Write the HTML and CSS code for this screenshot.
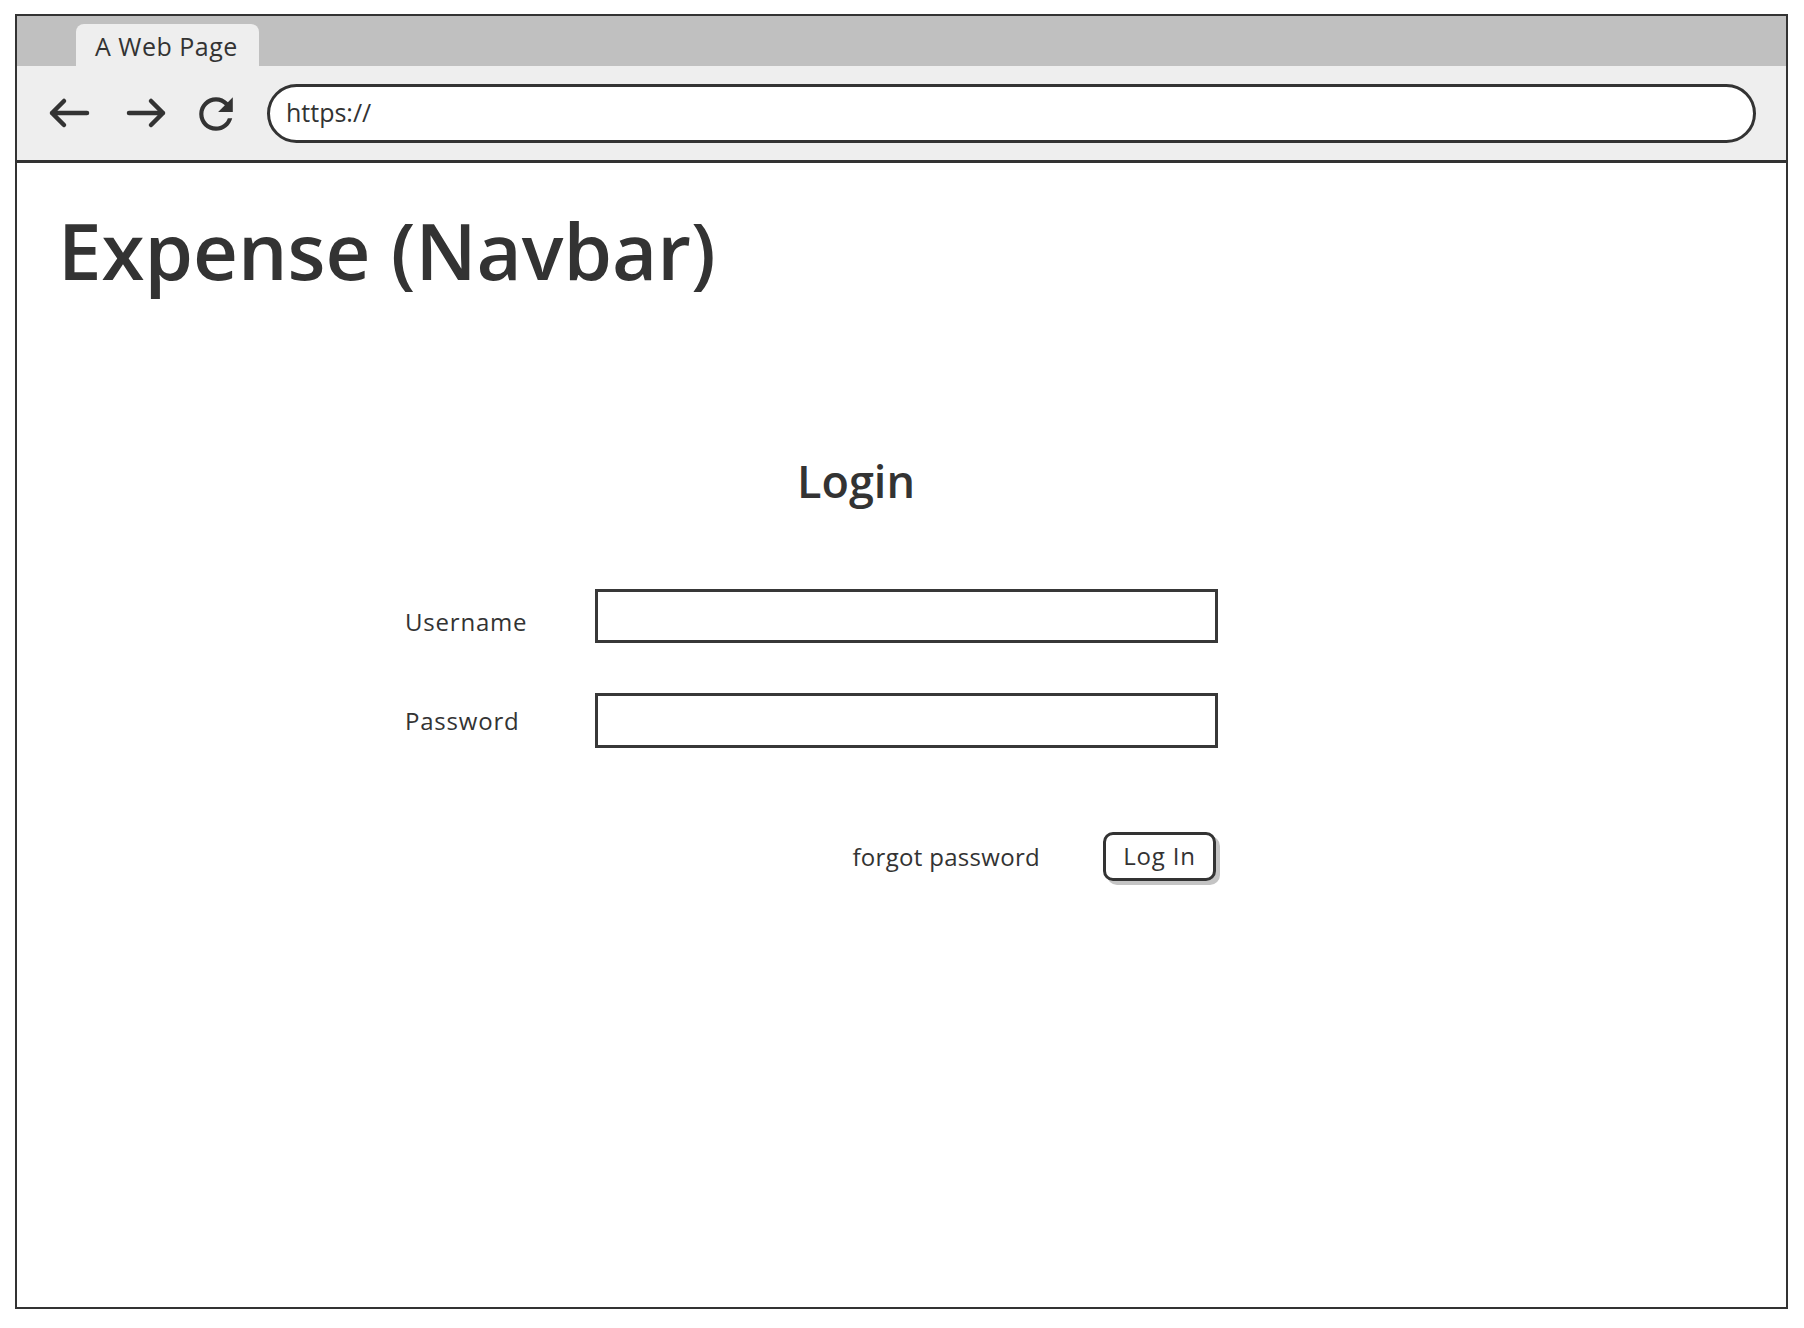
FILE: index.html
```html
<!DOCTYPE html>
<html lang="en">
<head>
<meta charset="utf-8">
<title>A Web Page</title>
<link rel="stylesheet" href="styles.css">
</head>
<body>
<div class="frame">
  <div class="tabbar">
    <div class="tab">A Web Page</div>
  </div>
  <div class="toolbar">
    <svg class="icon icon-back" width="48" height="40" viewBox="0 0 48 40" aria-hidden="true">
      <path d="M6 20H41M18 8L6 20L18 32" fill="none" stroke="#333" stroke-width="4.5" stroke-linecap="round" stroke-linejoin="round"/>
    </svg>
    <svg class="icon icon-fwd" width="48" height="40" viewBox="0 0 48 40" aria-hidden="true">
      <path d="M7 20H41M29 8L41 20L29 32" fill="none" stroke="#333" stroke-width="4.5" stroke-linecap="round" stroke-linejoin="round"/>
    </svg>
    <svg class="icon icon-reload" width="48" height="40" viewBox="0 0 48 40" aria-hidden="true">
      <g transform="translate(-1.2 -4.2) scale(2.1)">
        <path d="M17.65 6.35C16.2 4.9 14.21 4 12 4c-4.42 0-7.99 3.58-7.99 8s3.57 8 7.99 8c3.73 0 6.840-2.55 7.73-6h-2.08c-.82 2.33-3.04 4-5.65 4-3.31 0-6-2.69-6-6s2.69-6 6-6c1.66 0 3.14.69 4.22 1.78L13 11h7V4l-2.35 2.35z" fill="#333"/>
      </g>
    </svg>
    <div class="url">https://</div>
  </div>
  <div class="content">
    <h1 class="title">Expense (Navbar)</h1>
    <div class="form">
      <h2 class="form-title">Login</h2>
      <div class="row">
        <label class="label">Username</label>
        <div class="input"></div>
      </div>
      <div class="row row-second">
        <label class="label">Password</label>
        <div class="input"></div>
      </div>
      <div class="actions">
        <span class="forgot">forgot password</span>
        <div class="button">Log In</div>
      </div>
    </div>
  </div>
</div>
</body>
</html>
```

FILE: styles.css
```css
* {
  box-sizing: border-box;
}

html, body {
  margin: 0;
  padding: 0;
  background: #ffffff;
}

body {
  font-family: "Open Sans", "Liberation Sans", sans-serif;
  font-weight: 400;
  color: #333333;
  padding-top: 14px;
  padding-left: 15px;
}

.frame {
  width: 1773px;
  height: 1295px;
  border: 2px solid #333333;
  background: #ffffff;
  display: flex;
  flex-direction: column;
}

.tabbar {
  height: 50px;
  background: #c0c0c0;
  display: flex;
  align-items: flex-end;
  padding-left: 59px;
}

.tab {
  width: 183px;
  height: 42px;
  background: #eeeeee;
  border-radius: 8px 8px 0 0;
  font-size: 25px;
  line-height: 1;
  padding-top: 10px;
  padding-left: 19px;
  white-space: nowrap;
  letter-spacing: 0.5px;
}

.toolbar {
  height: 97px;
  background: #eeeeee;
  border-bottom: 3px solid #333333;
  display: flex;
  align-items: center;
  padding-left: 29px;
  padding-right: 30px;
}

.icon {
  flex: none;
  display: block;
}

.icon-fwd {
  margin-left: 28px;
}

.icon-reload {
  margin-left: 22px;
}

.url {
  margin-left: 27px;
  flex: 1;
  height: 59px;
  background: #ffffff;
  border: 3px solid #333333;
  border-radius: 30px;
  font-size: 25px;
  line-height: 1;
  display: flex;
  align-items: center;
  padding-left: 16px;
  padding-bottom: 2px;
}

.content {
  flex: 1;
  padding-left: 41px;
}

.title {
  margin: 48px 0 0 0;
  font-size: 78px;
  font-weight: 600;
  line-height: 1;
  letter-spacing: 0;
}

.form {
  margin-left: 347px;
  width: 813px;
}

.form-title {
  margin: 169px 0 0 0;
  padding-left: 392px;
  font-size: 45px;
  font-weight: 600;
  line-height: 1;
  letter-spacing: 0;
}

.row {
  margin-top: 86px;
  display: flex;
  align-items: center;
  height: 54px;
}

.row-second {
  margin-top: 50px;
  height: 55px;
}

.label {
  width: 190px;
  font-size: 24px;
  line-height: 1;
  padding-top: 11px;
  letter-spacing: 0.8px;
}

.row-second .label {
  padding-top: 0;
}

.input {
  width: 623px;
  height: 100%;
  border: 3px solid #383838;
  background: #ffffff;
}

.actions {
  margin-top: 84px;
  display: flex;
  align-items: center;
  justify-content: flex-end;
  padding-right: 2px;
}

.forgot {
  font-size: 24px;
  line-height: 1;
  margin-right: 63px;
  letter-spacing: 0.3px;
}

.button {
  width: 113px;
  height: 49px;
  border: 3px solid #333333;
  border-radius: 10px;
  background: #ffffff;
  box-shadow: 4px 4px 0 #c4c4c4;
  font-size: 24px;
  line-height: 1;
  letter-spacing: 0.8px;
  display: flex;
  align-items: center;
  justify-content: center;
  padding-bottom: 2px;
}
```
